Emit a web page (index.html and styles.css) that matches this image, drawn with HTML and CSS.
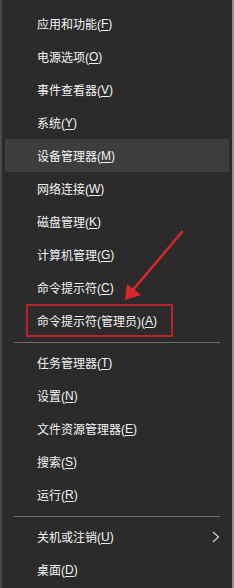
FILE: index.html
```html
<html>
	<head>
		<title>Win+X 菜单</title>
		<meta charset="utf-8" />
		<link rel="stylesheet" href="styles.css">
	</head>
	<body>
		<div class="menu">
			<div class="item">应用和功能(<u>F</u>)</div>
			<div class="item">电源选项(<u>O</u>)</div>
			<div class="item">事件查看器(<u>V</u>)</div>
			<div class="item">系统(<u>Y</u>)</div>
			<div class="item hover">设备管理器(<u>M</u>)</div>
			<div class="item">网络连接(<u>W</u>)</div>
			<div class="item">磁盘管理(<u>K</u>)</div>
			<div class="item">计算机管理(<u>G</u>)</div>
			<div class="item">命令提示符(<u>C</u>)</div>
			<div class="item"><span class="mark">命令提示符(管理员)(<u>A</u>)</span></div>
			<div class="sep"></div>
			<div class="item">任务管理器(<u>T</u>)</div>
			<div class="item">设置(<u>N</u>)</div>
			<div class="item">文件资源管理器(<u>E</u>)</div>
			<div class="item">搜索(<u>S</u>)</div>
			<div class="item">运行(<u>R</u>)</div>
			<div class="sep"></div>
			<div class="item">关机或注销(<u>U</u>)
				<svg class="chev" width="8" height="12" viewBox="0 0 8 12"><path d="M1 1 L6.5 6 L1 11" fill="none" stroke="#cfcfcf" stroke-width="1.2"/></svg>
			</div>
			<div class="item">桌面(<u>D</u>)</div>

			<svg class="arrow" width="234" height="588" viewBox="0 0 234 588">
				<line x1="182" y1="232" x2="132" y2="291" stroke="#d8262c" stroke-width="2.6" stroke-linecap="round"/>
				<polygon points="125,300 127,284 141,295" fill="#d8262c"/>
			</svg>
		</div>
	</body>
</html>
```

FILE: styles.css
```css
body {
	margin: 0;
	background: #2b2b2b;
}
.menu {
	position: relative;
	width: 234px;
	height: 588px;
	box-sizing: border-box;
	padding: 7px 3px 0 3px;
	background: #2b2b2b;
	border-left: 2px solid #4a4a4a;
	border-right: 2px solid #8f8f8f;
	font-family: "Liberation Sans", "Noto Sans CJK SC", sans-serif;
	font-size: 12px;
	color: #f4f4f4;
}
.item {
	display: flex;
	align-items: center;
	height: 33px;
	padding-left: 32px;
	padding-right: 9px;
	white-space: nowrap;
}
.item u {
	text-decoration-thickness: 1px;
	text-underline-offset: 2px;
}
.hover {
	background: #3d3d3d;
}
.mark {
	display: flex;
	align-items: center;
	height: 33px;
	margin-left: -11px;
	padding-left: 9px;
	padding-right: 14px;
	box-sizing: border-box;
	border: 2px solid #b9232b;
}
.sep {
	height: 1px;
	margin: 5px 9px 3px 9px;
	background: #6b6b6b;
}
.chev {
	margin-left: auto;
}
.arrow {
	position: absolute;
	left: -2px;
	top: 0;
	pointer-events: none;
}
```
